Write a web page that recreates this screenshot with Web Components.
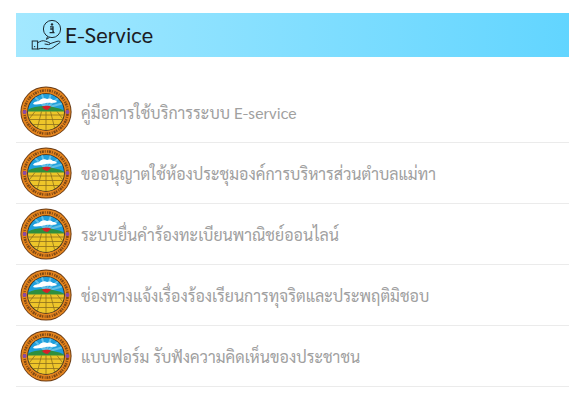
<!DOCTYPE html>
<html lang="th"><head><meta charset="utf-8"><style>
html,body{margin:0;padding:0;background:#fff;overflow:hidden}
</style></head><body>
<eservice-panel>
<service-item>คู่มือการใช้บริการระบบ E-service</service-item>
<service-item>ขออนุญาตใช้ห้องประชุมองค์การบริหารส่วนตำบลแม่ทา</service-item>
<service-item>ระบบยื่นคำร้องทะเบียนพาณิชย์ออนไลน์</service-item>
<service-item>ช่องทางแจ้งเรื่องร้องเรียนการทุจริตและประพฤติมิชอบ</service-item>
<service-item>แบบฟอร์ม รับฟังความคิดเห็นของประชาชน</service-item>
</eservice-panel>
<script>
class EservicePanel extends HTMLElement{constructor(){super();this.attachShadow({mode:'open'}).innerHTML=`
<style>
:host{display:block;padding:13px 0 0 16px;font-family:Sarabun,Lato,sans-serif}
header{height:44px;display:flex;align-items:center;gap:3px;padding-left:14px;background:linear-gradient(90deg,#a3e8ff,#62d5ff);color:#1c1c24;font-size:22px}
header span{padding-bottom:2px}
svg{display:block}
.list{margin-top:25px;display:flex;flex-direction:column}
</style>
<header>
<svg width="32" height="36" viewBox="0 0 32 36" fill="none" stroke="#1f2c33" stroke-width="1">
<circle cx="22" cy="12" r="8.6"/>
<path d="M17.6 19.4l-1.2 3 3.2-2"/>
<circle cx="22" cy="7.4" r="1.2" fill="#1f2c33" stroke="none"/>
<path d="M20 9.8h3v5h1M19.6 15.6h4.9M20.2 12h2.6" stroke-width="1.3"/>
<rect x="2.2" y="24" width="5.4" height="8"/>
<circle cx="4.6" cy="29.6" r=".7" fill="#1f2c33" stroke="none"/>
<path d="M7.6 25.8c2.8-1.7 5-2.6 7.6-1.7l4 1.4c1.6.6 1 2.4-.6 2.1l-4-.6M19.6 26.8l7.4-2.4c2.6-.8 4.2.4 2.4 1.6l-6.4 4.6c-1.8 1.2-3.6 1.5-5.4 1.3l-4.2-.5c-2-.2-3.4.1-5.8.8"/>
</svg>
<span>E-Service</span>
</header>
<div class="list"><slot></slot></div>`}}
class ServiceItem extends HTMLElement{constructor(){super();this.attachShadow({mode:'open'}).innerHTML=`
<style>
:host{display:flex;align-items:center;gap:9px;height:60px;padding-left:4px;border-bottom:1px solid #ebebeb;color:#a0a0a0;font-size:16px;font-family:Sarabun,Lato,"Noto Sans",sans-serif;white-space:nowrap}
</style>
<org-seal></org-seal><span><slot></slot></span>`}}
class OrgSeal extends HTMLElement{constructor(){super();this.attachShadow({mode:'open'}).innerHTML=`
<style>:host{display:block;flex:none;width:52px;height:52px}svg{display:block}</style>
<svg width="52" height="52" viewBox="0 0 52 52">
<defs><clipPath id="c"><circle cx="26" cy="26" r="18"/></clipPath></defs>
<circle cx="26" cy="26" r="25.6" fill="#6a3c16"/>
<circle cx="26" cy="26" r="24.6" fill="#e5851e"/>
<circle cx="26" cy="26" r="21.6" fill="none" stroke="#5c3412" stroke-width="2.6" stroke-dasharray="1.3 .7 2 1 .9 1.4" opacity=".75"/>
<circle cx="26" cy="26" r="18.8" fill="#2c2a25"/>
<g clip-path="url(#c)">
<rect x="6" y="6" width="40" height="20" fill="#1f9fdc"/>
<path d="M26 22L12 8M26 22L21 5M26 22L32 5M26 22L42 9M26 22L47 16" stroke="#62bfe6" stroke-width="2"/>
<path d="M13 18c1-2.6 4-2.6 6-3 2-3 6-3.600 8-2 2-1 5-.6 6 1 1.600 0 3 .6 4 2-4 1.600-8 .4-11 1-4 .6-9 2.400-13 1z" fill="#fff"/>
<path d="M7 24c5-2.600 10-3.600 15-4 5-.4 10 .4 13 1.400 3 .6 7 1.600 10 3.600v3H7z" fill="#2f8f3e"/>
<path d="M22 21c2-1.400 7-1.800 9-.2l-3.400 3.200c-2 0-4-1.200-5.600-3z" fill="#d81f2a"/>
<rect x="6" y="25.500" width="40" height="20" fill="#eec62a"/>
<path d="M6 29h40M6 33.500h40M6 38.500h40M26 25.500v20M21.500 25.500l-5 20M30.500 25.500l5 20M15 25.500L6 37M37 25.500l9 11.500" stroke="#8b6f1d" stroke-width=".8" fill="none"/>
</g>
<circle cx="4.6" cy="26" r="2" fill="#8a4aa8"/><circle cx="47.4" cy="26" r="2" fill="#8a4aa8"/>
</svg>`}}
customElements.define('org-seal',OrgSeal);
customElements.define('service-item',ServiceItem);
customElements.define('eservice-panel',EservicePanel);
</script></body></html>
